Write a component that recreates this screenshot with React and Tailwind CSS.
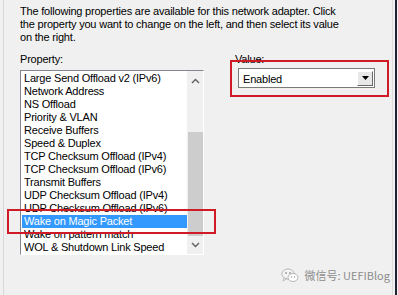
const FONT = { fontFamily: '"Liberation Sans", Arial, sans-serif' };

const properties = [
  "Large Send Offload v2 (IPv6)",
  "Network Address",
  "NS Offload",
  "Priority & VLAN",
  "Receive Buffers",
  "Speed & Duplex",
  "TCP Checksum Offload (IPv4)",
  "TCP Checksum Offload (IPv6)",
  "Transmit Buffers",
  "UDP Checksum Offload (IPv4)",
  "UDP Checksum Offload (IPv6)",
  "Wake on Magic Packet",
  "Wake on pattern match",
  "WOL & Shutdown Link Speed",
];

function WeChatIcon() {
  return (
    <svg width="18" height="15" viewBox="0 0 18 15">
      <ellipse cx="7" cy="6" rx="6.2" ry="5" fill="#f4f4f4" stroke="#b5b5b5" strokeWidth="1" />
      <path d="M3 10 L2 13 L6 10.6 Z" fill="#f4f4f4" stroke="#b5b5b5" strokeWidth="0.8" />
      <ellipse cx="12" cy="9.5" rx="5" ry="4" fill="#ffffff" stroke="#b5b5b5" strokeWidth="1" />
      <circle cx="5" cy="5" r="0.9" fill="#9a9a9a" />
      <circle cx="9" cy="5" r="0.9" fill="#9a9a9a" />
      <circle cx="10.5" cy="9" r="0.7" fill="#9a9a9a" />
      <circle cx="13.5" cy="9" r="0.7" fill="#9a9a9a" />
    </svg>
  );
}

export default function App() {
  return (
    <div
      className="relative w-[398px] h-[295px] overflow-hidden bg-[#f0f0f0] text-[11px] leading-[13px] tracking-[-0.2px] text-black"
      style={FONT}
    >
      <div className="flex h-full">
        <div className="ml-[3px] w-px h-full bg-[#d9d9d9]" />
        <div className="flex-1 pl-[16px] pt-[5px]">
          <p className="whitespace-nowrap">
            The following properties are available for this network adapter. Click
            <br />
            the property you want to change on the left, and then select its value
            <br />
            on the right.
          </p>
          <div className="mt-[9px] flex">
            <div className="w-[216px]">
              <div>Property:</div>
              <div className="mt-[4px] flex w-[184px] h-[185px] border border-[#828790] border-r-white border-b-white bg-white">
                <ul className="flex-1 pl-px pt-px">
                  {properties.map((p) => (
                    <li
                      key={p}
                      className={
                        p === "Wake on Magic Packet"
                          ? "h-[13px] pl-[2px] whitespace-nowrap bg-[#3399ff] text-white"
                          : "h-[13px] pl-[2px] whitespace-nowrap"
                      }
                    >
                      {p}
                    </li>
                  ))}
                </ul>
                <div className="w-[16px] flex flex-col items-center bg-[#f0f0f0]">
                  <svg className="mt-[7px]" width="9" height="6" viewBox="0 0 9 6">
                    <path d="M1 5 L4.5 1.5 L8 5" fill="none" stroke="#606060" strokeWidth="1.4" />
                  </svg>
                  <div className="mt-[48px] w-[15px] h-[104px] bg-[#cdcdcd]" />
                  <svg className="mt-[6px]" width="9" height="6" viewBox="0 0 9 6">
                    <path d="M1 1 L4.5 4.5 L8 1" fill="none" stroke="#606060" strokeWidth="1.4" />
                  </svg>
                </div>
              </div>
            </div>
            <div>
              <div className="-ml-[1px]">Value:</div>
              <div className="mt-[2px] ml-[2px] flex items-center w-[137px] h-[20px] border border-[#7a7a7a] bg-white">
                <span className="flex-1 pl-[4px] pt-[2px]">Enabled</span>
                <div className="mr-px flex items-center justify-center w-[16px] h-[15px] bg-[#e8e8e8] border border-t-white border-l-white border-r-[#696969] border-b-[#696969]">
                  <svg width="7" height="4" viewBox="0 0 7 4">
                    <path d="M0 0 L7 0 L3.5 4 Z" fill="#000" />
                  </svg>
                </div>
              </div>
            </div>
          </div>
          <div
            className="mt-[13px] flex items-center justify-end gap-[6px] pr-[2px] text-[11px] tracking-normal text-[#8c8c8c]"
            style={{ fontFamily: '"Noto Sans CJK SC", "Liberation Sans", sans-serif' }}
          >
            <WeChatIcon />
            <span>微信号: UEFIBlog</span>
          </div>
        </div>
        <div className="w-px h-full bg-[#dcdcdc]" />
        <div className="w-[2px]" />
        <div className="w-[2px] h-full bg-[#1e2430]" />
        <div className="w-px" />
      </div>

      {/* red annotation boxes */}
      <div className="absolute left-[7px] top-[209px] w-[209px] h-[25px] border-[2px] border-[#cf1b26]" />
      <div className="absolute left-[230px] top-[60px] w-[159px] h-[37px] border-[2px] border-[#cf1b26]" />
    </div>
  );
}
